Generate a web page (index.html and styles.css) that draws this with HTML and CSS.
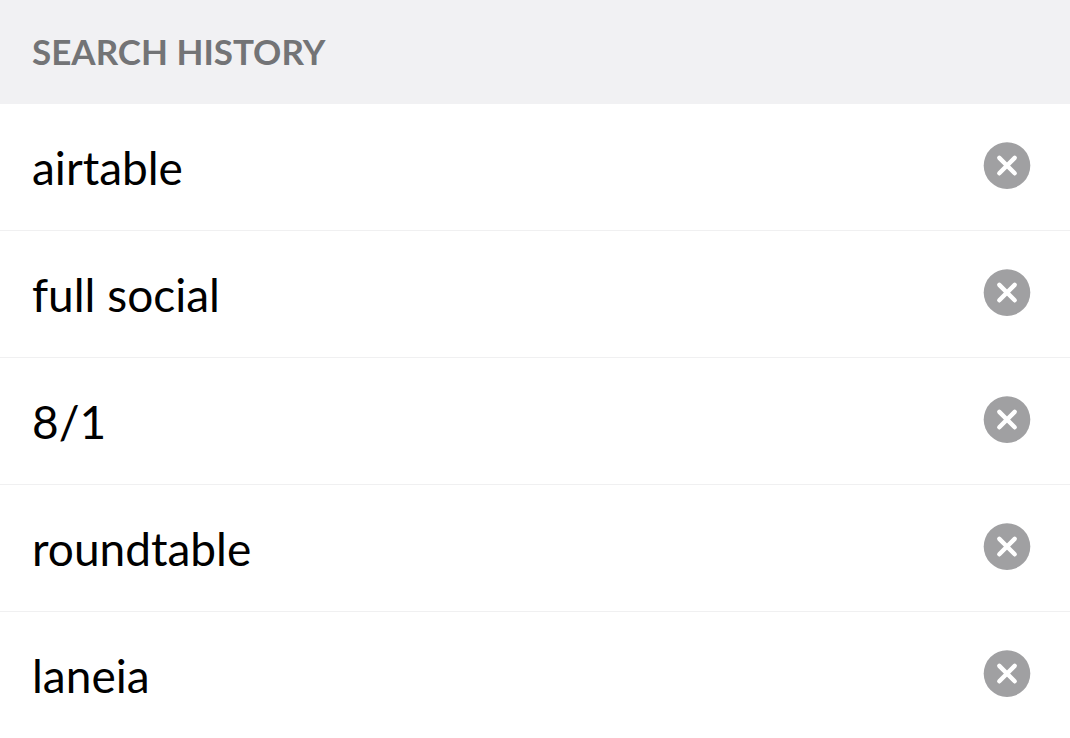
FILE: index.html
```html
<!DOCTYPE html>
<html lang="en">

<head>
    <meta charset="UTF-8">
    <meta name="viewport" content="width=device-width, initial-scale=1.0">
    <title>Search history</title>
    <link rel="stylesheet" href="styles.css">
</head>

<body>
    <svg width="0" height="0" class="sprite" aria-hidden="true">
        <symbol id="icon-clear" viewBox="0 0 48 48">
            <circle cx="24" cy="23.6" r="23.3" fill="#a0a0a2" />
            <path d="M16.3 15.9L31.7 31.3M31.7 15.9L16.3 31.3" stroke="#fff" stroke-width="4.4" stroke-linecap="round" />
        </symbol>
    </svg>

    <main>
        <h1 class="history-title">SEARCH HISTORY</h1>
        <ul class="history-list">
            <li class="history-item">
                <a href="#" class="history-link">airtable</a>
                <button type="button" class="clear-btn" aria-label="Remove airtable"><svg><use href="#icon-clear" /></svg></button>
            </li>
            <li class="history-item">
                <a href="#" class="history-link">full social</a>
                <button type="button" class="clear-btn" aria-label="Remove full social"><svg><use href="#icon-clear" /></svg></button>
            </li>
            <li class="history-item">
                <a href="#" class="history-link">8/1</a>
                <button type="button" class="clear-btn" aria-label="Remove 8/1"><svg><use href="#icon-clear" /></svg></button>
            </li>
            <li class="history-item">
                <a href="#" class="history-link">roundtable</a>
                <button type="button" class="clear-btn" aria-label="Remove roundtable"><svg><use href="#icon-clear" /></svg></button>
            </li>
            <li class="history-item">
                <a href="#" class="history-link">laneia</a>
                <button type="button" class="clear-btn" aria-label="Remove laneia"><svg><use href="#icon-clear" /></svg></button>
            </li>
        </ul>
    </main>
</body>

</html>
```
FILE: styles.css
```css
:root {
    --light: #ffffff;
    --gray: #f1f1f3;
    --line: #f0f0f1;
    --muted: #737476;
    --text: #000000;
}

* {
    margin: 0;
    padding: 0;
    box-sizing: border-box;
}

body {
    font-family: Lato, sans-serif;
    background-color: var(--light);
    color: var(--text);
}

.sprite {
    display: block;
}

.history-title {
    padding: 29px 32px 31px;
    background-color: var(--gray);
    color: var(--muted);
    font-size: 35px;
    line-height: 44px;
    font-weight: 700;
}

.history-list {
    list-style: none;
}

.history-item {
    display: flex;
    align-items: flex-start;
    padding: 0 39px 0 32px;
    border-bottom: 1px solid var(--line);
}

.history-item:last-child {
    border-bottom: none;
}

.history-link {
    flex: 1;
    padding: 36px 0 34px;
    color: var(--text);
    font-size: 46px;
    line-height: 56px;
    text-decoration: none;
}

.clear-btn {
    width: 48px;
    height: 48px;
    margin-top: 38px;
    border: none;
    background: none;
    cursor: pointer;
}

.clear-btn svg {
    display: block;
    width: 48px;
    height: 48px;
}
```
